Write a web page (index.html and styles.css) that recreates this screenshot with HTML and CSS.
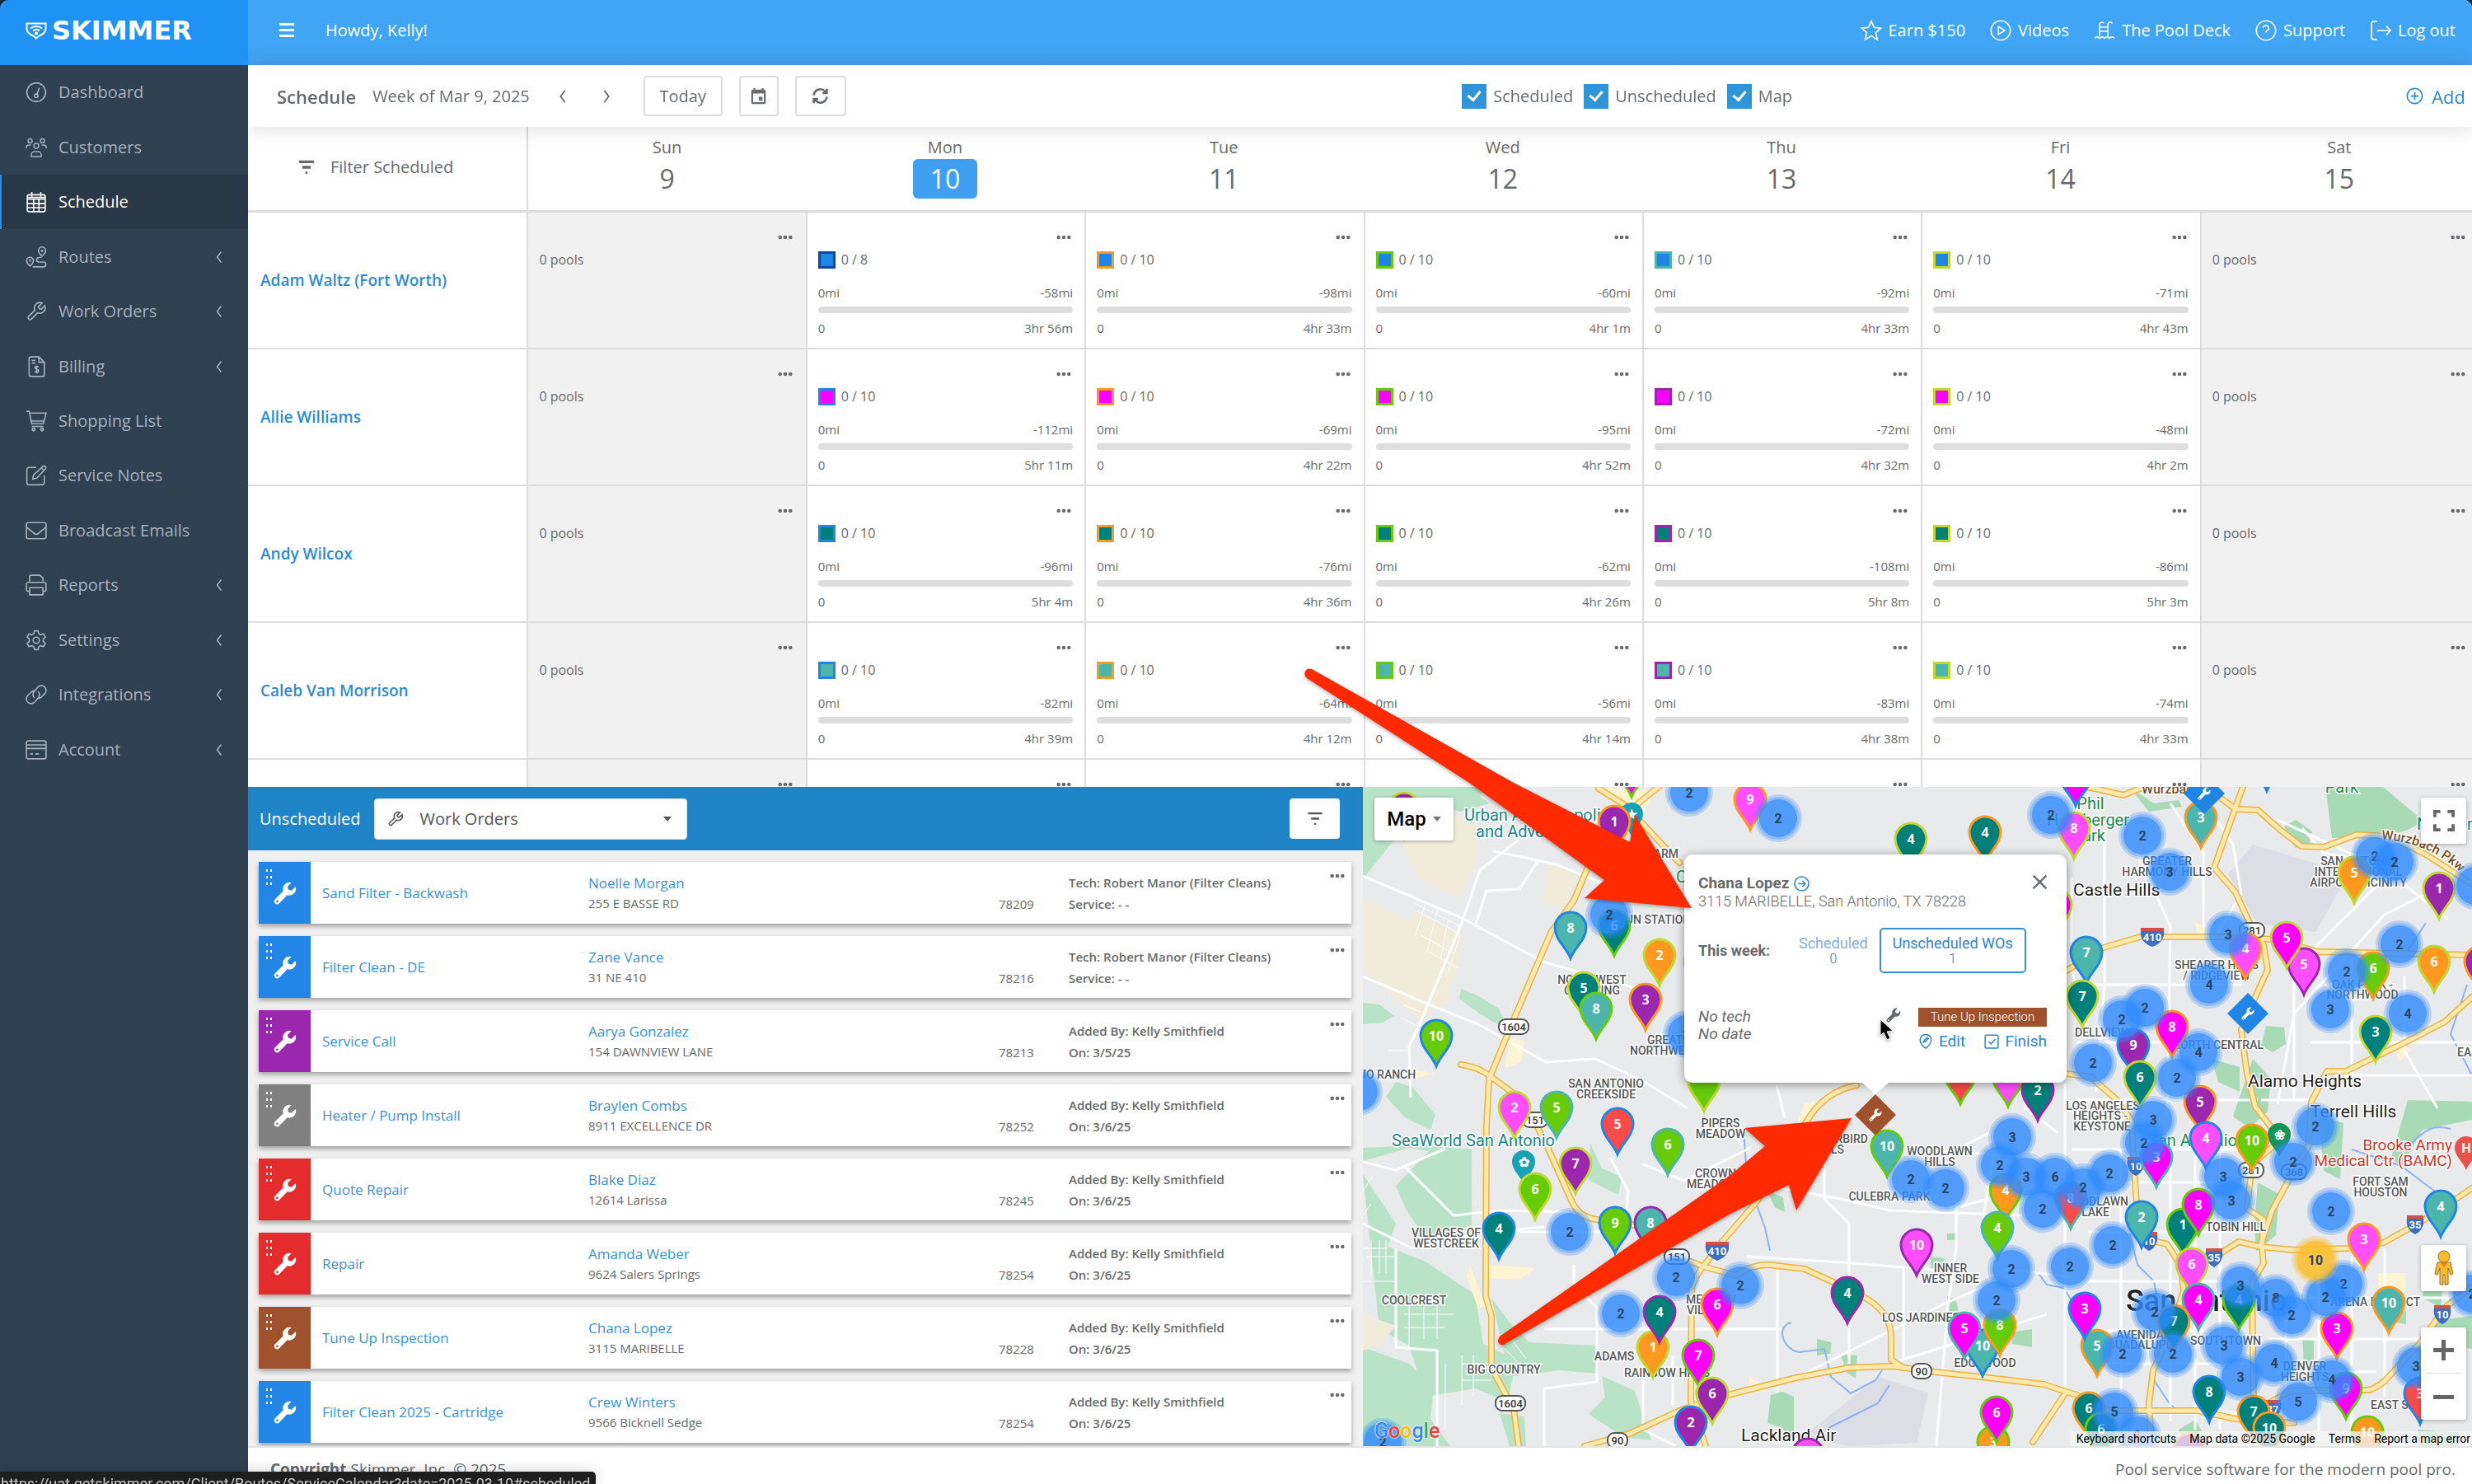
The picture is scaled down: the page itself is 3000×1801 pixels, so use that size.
FILE: index.html
```html
<!DOCTYPE html>
<html lang="en">
<head>
<meta charset="utf-8">
<title>Skimmer – Schedule</title>
<link rel="stylesheet" href="styles.css">
<script src="app.js" defer></script>
</head>
<body>
<svg class="sprite" aria-hidden="true">
  <symbol id="i-gauge" viewBox="0 0 24 24"><circle cx="12" cy="12" r="10.5"/><circle cx="12" cy="16" r="2"/><path d="M12.8 14l2.7-7M6 12h.1M7.8 7.8h.1M12 5.8h.1M18 12h.1"/></symbol>
  <symbol id="i-users" viewBox="0 0 26 24"><circle cx="13" cy="10" r="3"/><circle cx="5.500" cy="4" r="2.500"/><circle cx="20.500" cy="4" r="2.500"/><path d="M7 23v-2a4 4 0 0 1 4-4h4a4 4 0 0 1 4 4v2zM1 13v-1a3 3 0 0 1 3-3h2.500M25 13v-1a3 3 0 0 0-3-3h-2.500"/></symbol>
  <symbol id="i-calendar" viewBox="0 0 24 24"><rect x="2" y="4" width="20" height="19" rx="2"/><path d="M2 9h20M2 14h20M2 18.500h20M9 9v14M15 9v14M7 1v5M17 1v5M2 7h20"/></symbol>
  <symbol id="i-route" viewBox="0 0 24 24"><path d="M18.500 11s-4-3.500-4-6.300a4 4 0 0 1 8 0c0 2.800-4 6.300-4 6.300zM5 22s-3.800-3.300-3.800-6a3.800 3.800 0 0 1 7.600 0c0 2.700-3.800 6-3.800 6zM18 12.500h-3a2.500 2.500 0 0 0 0 5h5a2.700 2.700 0 0 1 0 5.500H8"/><circle cx="18.500" cy="5" r=".6"/><circle cx="5" cy="16" r=".6"/></symbol>
  <symbol id="i-wrench" viewBox="0 0 24 24"><path d="M14.700 6.300a1 1 0 0 0 0 1.400l1.600 1.600a1 1 0 0 0 1.400 0l3.770-3.770a6 6 0 0 1-7.940 7.940l-6.910 6.910a2.120 2.120 0 0 1-3-3l6.910-6.910a6 6 0 0 1 7.940-7.940l-3.760 3.760z"/></symbol>
  <symbol id="i-wrench-solid" viewBox="0 0 24 24"><path fill="currentColor" stroke="none" fill-rule="evenodd" d="M22.800 5.200l-4 4-3.400-.8-.8-3.400 4-4a6.800 6.800 0 0 0-8.500 8.700L1.600 18.200a3 3 0 0 0 4.300 4.300l8.400-8.500a6.800 6.800 0 0 0 8.500-8.800zM3.800 21.600a1.200 1.200 0 1 1 0-2.400 1.200 1.200 0 0 1 0 2.400z"/></symbol>
  <symbol id="i-bill" viewBox="0 0 24 24"><path d="M4 3a2 2 0 0 1 2-2h9l6 6v14a2 2 0 0 1-2 2H6a2 2 0 0 1-2-2zM15 1v6h6M7 5h4M7 8h4M14.500 12.500c-.5-.7-1.200-1-2-1-1.200 0-2 .7-2 1.600 0 2.400 4.200 1.100 4.200 3.500 0 1-.9 1.700-2.200 1.700-1 0-1.800-.4-2.200-1.100M12.500 10.500v9"/></symbol>
  <symbol id="i-cart" viewBox="0 0 24 24"><path d="M1 1h3l3 14h13l3-12H4.500M6 12h15M7 18h13"/><circle cx="9" cy="21.500" r="1.500"/><circle cx="18.500" cy="21.500" r="1.500"/></symbol>
  <symbol id="i-note" viewBox="0 0 24 24"><path d="M12 3H4a2.500 2.500 0 0 0-2.500 2.500v14.500A2.500 2.500 0 0 0 4 22.500h14.500A2.500 2.500 0 0 0 21 20v-8M8 16l1-4.500L19.500 1.800a2 2 0 0 1 2.800 2.800L12.500 15zM17.500 3.500l3 3"/></symbol>
  <symbol id="i-mail" viewBox="0 0 24 24"><rect x="1" y="3" width="22" height="18" rx="2"/><path d="M1 8l8.500 7a4 4 0 0 0 5 0L23 8"/></symbol>
  <symbol id="i-print" viewBox="0 0 24 24"><path d="M4.500 8V3a2 2 0 0 1 2-2h9.500l3.500 3v4M4 19H3a2 2 0 0 1-2-2v-6a2 2 0 0 1 2-2h18a2 2 0 0 1 2 2v6a2 2 0 0 1-2 2h-1M4.500 15h15v8h-15zM19 12h.1"/></symbol>
  <symbol id="i-gear" viewBox="0 0 24 24"><circle cx="12" cy="12" r="3.500"/><path d="M10 1.500h4l.8 3.200 2.200 1.200 3.200-1 2 3.500-2.400 2.400v2.400l2.400 2.400-2 3.500-3.200-1-2.200 1.200-.8 3.200h-4l-.8-3.200L7 18.100l-3.200 1-2-3.500 2.400-2.400v-2.400L1.800 8.400l2-3.500 3.200 1 2.200-1.200z"/></symbol>
  <symbol id="i-link" viewBox="0 0 24 24"><path d="M10 15.500c-2.500-2-2-5.500 0-7.500l4-4.500c2-2 5.500-2 7.500 0s2 5.500 0 7.500l-4 4c-1.500 1.300-3 1.500-4.500 1M14 8.500c2.500 2 2 5.500 0 7.500l-4 4.500c-2 2-5.500 2-7.500 0s-2-5.500 0-7.500l4-4c1.500-1.300 3-1.500 4.500-1"/></symbol>
  <symbol id="i-card" viewBox="0 0 24 24"><rect x="1" y="2" width="22" height="20" rx="2"/><path d="M1 6.500h22M1 10.500h22M5 16.500h3.500M11 16.500h4"/></symbol>
  <symbol id="i-left" viewBox="0 0 12 20"><path d="M9 2L3 10l6 8"/></symbol>
  <symbol id="i-right" viewBox="0 0 12 20"><path d="M3 2l6 8-6 8"/></symbol>
  <symbol id="i-star" viewBox="0 0 24 24"><path d="M12 1.500l3.200 7 7.500.8-5.600 5.100 1.600 7.600L12 18.100 5.300 22l1.600-7.600L1.300 9.300l7.500-.8z"/></symbol>
  <symbol id="i-play" viewBox="0 0 24 24"><circle cx="12" cy="12" r="10.800"/><path d="M9.500 7.500l7 4.500-7 4.500z"/></symbol>
  <symbol id="i-pool" viewBox="0 0 26 24"><path d="M7 19V4.500a3 3 0 0 1 5.500-1.200M17 19V4.500a3 3 0 0 1 5.500-1.200M7 8h10M7 13h10M1 21.500c2-2.500 4-2.500 6 0 2-2.500 4-2.500 6 0 2-2.500 4-2.500 6 0 2-2.500 4-2.500 6 0"/></symbol>
  <symbol id="i-help" viewBox="0 0 24 24"><circle cx="12" cy="12" r="10.800"/><path d="M9 9.300a3 3 0 1 1 4.300 2.700c-.9.500-1.300 1-1.300 2.200M12 17.500h.1"/></symbol>
  <symbol id="i-exit" viewBox="0 0 24 24"><path d="M8 2H4a2 2 0 0 0-2 2v16a2 2 0 0 0 2 2h4M8 12h15M18.500 7l4.500 5-4.500 5"/></symbol>
  <symbol id="i-plus" viewBox="0 0 24 24"><circle cx="12" cy="12" r="10.500"/><path d="M12 6.500v11M6.500 12h11"/></symbol>
  <symbol id="i-filter" viewBox="0 0 24 24"><path d="M1 4h22M6 12h12M10.500 20h3"/></symbol>
  <symbol id="i-event" viewBox="0 0 24 24"><path fill="currentColor" stroke="none" fill-rule="evenodd" d="M5 1h2.500v2h9V1H19v2h1a2 2 0 0 1 2 2v16a2 2 0 0 1-2 2H4a2 2 0 0 1-2-2V5a2 2 0 0 1 2-2h1zM4.500 8.500v12h15v-12zM12.500 13h5v5.500h-5z"/></symbol>
  <symbol id="i-sync" viewBox="0 0 24 24"><path d="M3 11a9 9 0 0 1 15.500-5.500L21 8M21 2v6h-6M21 13a9 9 0 0 1-15.500 5.500L3 16M3 22v-6h6"/></symbol>
  <symbol id="i-dots" viewBox="0 0 20 6"><g fill="currentColor" stroke="none"><circle cx="3" cy="3" r="2.500"/><circle cx="10" cy="3" r="2.500"/><circle cx="17" cy="3" r="2.500"/></g></symbol>
  <symbol id="i-grip" viewBox="0 0 8 20"><path fill="currentColor" stroke="none" d="M0 0h2v3H0zM5 0h2v3H5zM0 8h2v3H0zM5 8h2v3H5zM0 16h2v3H0zM5 16h2v3H5z"/></symbol>
  <symbol id="i-caret" viewBox="0 0 10 6"><path fill="currentColor" stroke="none" d="M0 0h10L5 6z"/></symbol>
  <symbol id="i-go" viewBox="0 0 24 24"><circle cx="12" cy="12" r="10.800"/><path d="M6.500 12h11M13 7.500l4.500 4.500-4.500 4.500"/></symbol>
  <symbol id="i-close" viewBox="0 0 24 24"><path d="M2 2l20 20M22 2L2 22"/></symbol>
  <symbol id="i-pinedit" viewBox="0 0 24 24"><path d="M12 23s-9-7-9-13.500a9 9 0 0 1 18 0C21 16 12 23 12 23zM8.500 13l1-3 5-4.500 1.800 1.800-5 4.700z"/></symbol>
  <symbol id="i-check" viewBox="0 0 24 24"><rect x="1.500" y="1.500" width="21" height="21" rx="2"/><path d="M7 12l4 4 7-8"/></symbol>
  <symbol id="i-full" viewBox="0 0 24 24"><path d="M1.500 8V1.500H8M16 1.500h6.500V8M22.500 16v6.500H16M8 22.500H1.500V16"/></symbol>
  <symbol id="i-man" viewBox="0 0 24 44"><g fill="#f9bb2d" stroke="#8a6a2a" stroke-width="1"><path d="M4 15h16l3 14-3 1-3-8v20h-4V30h-2v12H7V22l-3 8-3-1z"/><circle cx="12" cy="8" r="7"/></g><path fill="#e07b1f" stroke="none" d="M8 15h8l-4 6z"/></symbol>
</svg>

<div class="app">
  <aside class="side">
    <a class="brand" href="#"><svg class="shield" viewBox="0 0 26 20" aria-hidden="true"><path d="M1.500 1.500h23v6c0 5-4 7.500-8 9L13 19.500 9.500 16.500c-4-1.500-8-4-8-9z"/><path d="M6 7.500c4-3.500 10-3.500 14 0M9 10.500c2.500-2 5.500-2 8 0"/><circle cx="13" cy="13.500" r="1"/></svg><span>SKIMMER</span></a>
    <nav class="nav" aria-label="Main">
      <a href="#"><svg class="ic"><use href="#i-gauge"/></svg><span>Dashboard</span></a>
      <a href="#"><svg class="ic"><use href="#i-users"/></svg><span>Customers</span></a>
      <a href="#" class="on" aria-current="page"><svg class="ic"><use href="#i-calendar"/></svg><span>Schedule</span></a>
      <a href="#"><svg class="ic"><use href="#i-route"/></svg><span>Routes</span><svg class="chev"><use href="#i-left"/></svg></a>
      <a href="#"><svg class="ic"><use href="#i-wrench"/></svg><span>Work Orders</span><svg class="chev"><use href="#i-left"/></svg></a>
      <a href="#"><svg class="ic"><use href="#i-bill"/></svg><span>Billing</span><svg class="chev"><use href="#i-left"/></svg></a>
      <a href="#"><svg class="ic"><use href="#i-cart"/></svg><span>Shopping List</span></a>
      <a href="#"><svg class="ic"><use href="#i-note"/></svg><span>Service Notes</span></a>
      <a href="#"><svg class="ic"><use href="#i-mail"/></svg><span>Broadcast Emails</span></a>
      <a href="#"><svg class="ic"><use href="#i-print"/></svg><span>Reports</span><svg class="chev"><use href="#i-left"/></svg></a>
      <a href="#"><svg class="ic"><use href="#i-gear"/></svg><span>Settings</span><svg class="chev"><use href="#i-left"/></svg></a>
      <a href="#"><svg class="ic"><use href="#i-link"/></svg><span>Integrations</span><svg class="chev"><use href="#i-left"/></svg></a>
      <a href="#"><svg class="ic"><use href="#i-card"/></svg><span>Account</span><svg class="chev"><use href="#i-left"/></svg></a>
    </nav>
  </aside>

  <main class="main">
    <header class="top">
      <button class="burger" type="button" aria-label="Toggle menu"><i></i><i></i><i></i></button>
      <span class="howdy">Howdy, Kelly!</span>
      <nav class="links" aria-label="Account">
        <a href="#"><svg class="ic"><use href="#i-star"/></svg>Earn $150</a>
        <a href="#"><svg class="ic"><use href="#i-play"/></svg>Videos</a>
        <a href="#"><svg class="ic"><use href="#i-pool"/></svg>The Pool Deck</a>
        <a href="#"><svg class="ic"><use href="#i-help"/></svg>Support</a>
        <a href="#"><svg class="ic"><use href="#i-exit"/></svg>Log out</a>
      </nav>
    </header>

    <div class="bar">
      <div class="bar-left">
        <h1>Schedule</h1>
        <span class="week">Week of Mar 9, 2025</span>
        <button class="step" type="button" aria-label="Previous week"><svg><use href="#i-left"/></svg></button>
        <button class="step" type="button" aria-label="Next week"><svg><use href="#i-right"/></svg></button>
        <button class="btn today" type="button">Today</button>
        <button class="btn pick" type="button" aria-label="Pick date"><svg><use href="#i-event"/></svg></button>
        <button class="btn sync" type="button" aria-label="Refresh"><svg><use href="#i-sync"/></svg></button>
      </div>
      <div class="checks">
        <label><input type="checkbox" checked>Scheduled</label>
        <label><input type="checkbox" checked>Unscheduled</label>
        <label><input type="checkbox" checked>Map</label>
      </div>
      <a class="add" href="#"><svg><use href="#i-plus"/></svg>Add</a>
    </div>

    <section class="cal">
      <table>
        <thead>
          <tr>
            <th scope="col"><button class="filter" type="button"><svg><use href="#i-filter"/></svg>Filter Scheduled</button></th>
            <th scope="col">Sun<b>9</b></th>
            <th scope="col">Mon<b class="now">10</b></th>
            <th scope="col">Tue<b>11</b></th>
            <th scope="col">Wed<b>12</b></th>
            <th scope="col">Thu<b>13</b></th>
            <th scope="col">Fri<b>14</b></th>
            <th scope="col">Sat<b>15</b></th>
          </tr>
        </thead>
        <tbody id="techs"></tbody>
      </table>
    </section>

    <div class="lower">
      <section class="orders">
        <div class="orders-head">
          <label for="kind">Unscheduled</label>
          <div class="pickbox">
            <svg class="lead"><use href="#i-wrench"/></svg>
            <select id="kind"><option>Work Orders</option></select>
            <svg class="caret"><use href="#i-caret"/></svg>
          </div>
          <button class="sift" type="button" aria-label="Filter"><svg><use href="#i-filter"/></svg></button>
        </div>
        <ul class="list" id="orders"></ul>
      </section>

      <section class="map" aria-label="Map">
        <svg class="ground" width="100%" height="100%">
          <g fill="#b8e3c6">
            <path d="M0 0h150l-8 12 12 8-36 10-20-6-60 40L0 112z"/>
            <path d="M119 245l20 8 26 16 10 22-18-6-24-16-16-12zM0 262l20 2 18 14-14 8-24 2z"/>
            <path d="M40 358l20 6 28 34-6 18-30-14-24-26z"/>
            <path d="M0 438l70-3 62 5v92l-56 16-24-36-12-28 40-42-24-4-56 16z"/>
            <path d="M0 470l40 60-10 28 46 18 60 40 10 60 40 20-10 50-40-16-60 10-20-62-36-20z"/>
            <path d="M0 680l56 20 30 28-4 40 24 32H0zM156 620l22 30 24 24 82 4 2 34-48-4-60 8zM290 715l40 18 20 60-34-4-42-28 20-20z"/>
            <path d="M276 433l14 30 24 10-4 22-36-18zM166 760l30 4 2 36h-20z"/>
          </g>
          <g fill="#a8dab5">
            <path d="M1168 0h70l50 42-20 10-20 6-72 4zM1118 48l14-8 20 14-4 18-16 2-10-14zM930 0l30 20 30-4 4 8-40 6zM1096 290l22 2 2 20-16 10-14-8zM1080 330l22 24-4 40-22 20-20-14zM1268 380l78 2v22l-60 12-26 46-12-12zM1030 330l34 10v30l-26-12zM495 738l14-4 14 6v56l-14-18-18-6zM551 670l18 4-2 14-16 2zM580 688l20 2-2 28-12-8zM490 490l20 8 2 18-12-6zM709 618l10 4 4 14-14 2zM688 570l18 2-2 18-14-4zM786 662l26-4v22l-24-4zM1086 480l26 14-4 50-24 20-2-34zM1160 400l30 8-4 68-20-10zM1240 632l26 4v16l-26-4zM1300 648l46-6v40l-40-8zM1140 670l14 2v30l-12-4zM1288 590l24 2-4 40-22-12zM990 780l20-12 8 14-24 8zM1280 780l50 4v16h-50zM709 542h10v8h-10z"/>
          </g>
          <g fill="#f1ecd9">
            <path d="M30 30l110 6-4 60-20 40-50-26zM226 95l32 8-10 44-30-8zM0 135l100 46 6 80-40 20-66-60zM60 150l60 30-10 60-50-20zM0 640l40 14-20 24-20 6z"/>
            <path fill="#fcf4d3" d="M280 0l74 4-24 50-16-30zM178 304l18 4-4 26-20 8zM150 580l60 4-20 14-36-2zM130 580l18 50-8 4-14-40zM60 342l26 6-24 6zM1232 590h34v22h-34zM1250 310l22 8-14 16zM536 384l20-4-18 34-12-2zM470 715l20 18-24 4zM1010 165l16 6-12 18z"/>
          </g>
          <path fill="#dcdde5" d="M1080 70l66 20 50 16-40 70-70-10-36-60zM626 716l60 20-14 60-80 4-60-10z"/>
          <g fill="none" stroke="#8ab4f8">
            <path d="M520 650c-20 4-10 34 10 36l30-4 8 34 24 20 30-16 8-12M462 415l4 60 22 60 6 28M818 588l12 16 20 4 12 18M930 540l10 40 20 20 6 30M960 720l20 30 14 10M1290 165l-26 40M1340 240l-20 60 26 50M1270 435c20-20 30-26 50-20M1200 440l60 20 40 30M565 778l60-30 14-22"/>
          </g>
          <g class="street">
            <path d="M0 108l122 52 96 52 126 36M0 230l80 34 60 24 82 46 60-4 56 26 56 34M188 65l-46 36-22 64-50 120-14 30 2 62M158 78l40 8 36 8 60 24M212 90l-22 34-40 2-14 44M0 455l40 10 60-26M0 530l60 30 90-20 70-6M40 560l0 120 50 4v120M50 460l60 60 60-6 80 2M150 540l150 0M256 580v24l28 28v90l-64 8v70M220 658h210M300 450l22 40-2 30M345 530v20M340 458l50 20 80-40M430 400l30 34M340 720v60l40 20M376 690v60M502 362l10 40M560 420v80l30 30v170M470 480l110 20 60 14 160 6M466 570l130 8 120 10M656 584v110M503 580v155M430 658h78M770 420l-20 120M680 440l140 10M760 500l-40 10v50l-10 70-14 170M640 700l190-60M520 720l180-90 90-40M804 330v60l40 30M852 360v380M700 450l60-30M780 585l80 10"/>
            <path d="M860 110v110l20 80M900 60v180l-10 130M940 80l40 90-4 230M980 20l40 60v90M1010 0l46 70 10 60-30 50M1140 50l26 30 50 10 50 30 50 40M1110 40l130 60M1250 100l-90 90-30 40v150M1290 130l-50 25-110 120-20 110M1200 200v150M1264 230v90l40 70M1150 310h196M1180 350h166M866 240h200M866 310h190M866 380h220M860 440h240M860 480h210M880 540h210M880 600h210M870 660h150M890 700h180M880 760h200M1010 440v340M1040 420v360M980 440v330M920 440v340M1120 600v200M1160 590v210M1200 570v230M1240 560v180M1110 620h240M1100 670h230M1110 710h120M1150 380h-60"/>
          </g>
          <g class="street thin">
            <path d="M60 140l60 30M64 150l54 28M76 140l-12 40M90 150l-12 50M104 160l-10 50M118 180l-14 44M70 180l40 22M80 200l36 20M0 490l12-18M0 520l10-14M0 560h30M10 550v40M20 550v40M28 550v40M4 570h34M0 600h40M50 640h60M50 656h50M56 630v50M74 630v40M90 630v40M100 700v80M120 690v60M134 690v50M120 700h36M120 720h36M50 265l20 8M46 280l20 10M30 320h24M170 680l20 20M180 670l18 24"/>
          </g>
          <g id="highways"></g>
          <g id="labels"></g>
          <g id="markers"></g>
        </svg>
        <button class="ctl maptype" type="button">Map<svg><use href="#i-caret"/></svg></button>
        <button class="ctl full" type="button" aria-label="Fullscreen"><svg><use href="#i-full"/></svg></button>
        <button class="ctl pegman" type="button" aria-label="Street View"><svg><use href="#i-man"/></svg></button>
        <div class="ctl zoom">
          <button type="button" aria-label="Zoom in"><i></i><i class="v"></i></button>
          <button type="button" aria-label="Zoom out"><i></i></button>
        </div>
        <div class="google" aria-label="Google"><span>G</span><span>o</span><span>o</span><span>g</span><span>l</span><span>e</span></div>
        <div class="credit"><a href="#">Keyboard shortcuts</a><span>Map data ©2025 Google</span><a href="#">Terms</a><a href="#">Report a map error</a></div>

        <article class="info">
          <button class="close" type="button" aria-label="Close"><svg><use href="#i-close"/></svg></button>
          <h2>Chana Lopez <a href="#" aria-label="Open customer"><svg><use href="#i-go"/></svg></a></h2>
          <p class="addr">3115 MARIBELLE, San Antonio, TX 78228</p>
          <div class="tabs">
            <strong>This week:</strong>
            <button type="button" class="tab dim">Scheduled<span>0</span></button>
            <button type="button" class="tab sel">Unscheduled WOs<span>1</span></button>
          </div>
          <div class="job">
            <p class="none">No tech<br>No date</p>
            <svg class="tool"><use href="#i-wrench-solid"/></svg>
            <div class="act">
              <span class="tag">Tune Up Inspection</span>
              <div class="acts"><a href="#"><svg><use href="#i-pinedit"/></svg>Edit</a><a href="#"><svg><use href="#i-check"/></svg>Finish</a></div>
            </div>
          </div>
        </article>
      </section>
    </div>

    <footer class="foot">
      <span><b>Copyright</b> Skimmer, Inc. © 2025</span>
      <span>Pool service software for the modern pool pro.</span>
    </footer>
  </main>
</div>

<div class="status">https://uat.getskimmer.com/Client/Routes/ServiceCalendar?date=2025-03-10#scheduled</div>

<svg class="notes" aria-hidden="true">
  <g fill="#ff2a00">
    <path d="M1592 812Q1586 810 1584 815T1586 823L1783 950 1947 1068 1923 1090 2053 1102 1984 989 1978 1022 1837 950z"/>
    <path d="M1820 1622Q1816 1628 1820 1631T1828 1630L2100 1473 2171 1438 2180 1469 2247 1357 2117 1369 2142 1391 2100 1426z"/>
  </g>
  <path fill="#000" stroke="#fff" stroke-width="1" d="M2282 1237v20l4-4 4 9 4-2-4-8 7-1z"/>
</svg>
</body>
</html>
```
FILE: styles.css
```css
* { box-sizing: border-box; }
html { background: #16293a; }
body { margin: 0; font: 20px/28px "Open Sans", "Noto Sans", sans-serif; color: #676a6c; overflow: hidden; }
a { color: inherit; text-decoration: none; }
button { font: inherit; color: inherit; background: none; border: 0; padding: 0; margin: 0; }
h1, h2, p, ul { margin: 0; padding: 0; }
svg { fill: none; stroke: currentColor; stroke-width: 2; flex: none; overflow: visible; }
.sprite { position: absolute; width: 0; height: 0; }

.app { display: flex; height: 100vh; border-radius: 10px 10px 0 0; overflow: hidden; }
.side { width: 301px; flex: none; background: #2f4050; color: #a7b1bd; }
.brand { display: flex; align-items: center; gap: 6px; height: 79px; padding: 0 0 6px 31px; background: #1f93f5; color: #fff; font: bold 32px/32px "DejaVu Sans", sans-serif; }
.shield { width: 26px; height: 20px; }
.nav { display: grid; grid-template-rows: repeat(13, 1fr); height: 864px; }
.nav a { display: flex; align-items: center; gap: 14px; padding: 0 30px 0 29px; border-left: 2px solid transparent; }
.nav a.on { background: #293846; color: #fff; border-color: #1e90f0; }
.ic { width: 26px; height: 26px; stroke-width: 1.5; }
.chev { width: 10px; height: 16px; margin-left: auto; }

.main { flex: 1; min-width: 0; display: flex; flex-direction: column; background: #fff; overflow: hidden; }
.top { display: flex; align-items: center; height: 79px; flex: none; padding: 0 20px 6px 38px; background: linear-gradient(#40a5f5 70%, #46a0ee); color: #fff; }
.burger { display: grid; gap: 4px; width: 18px; margin-right: 38px; }
.burger i { height: 3px; background: #fff; }
.links { display: flex; gap: 30px; margin-left: auto; }
.links a { display: flex; align-items: center; gap: 8px; }

.bar { position: relative; z-index: 1; display: flex; align-items: center; height: 75px; flex: none; padding: 0 8px 0 35px; background: #fff; box-shadow: 0 2px 24px rgba(0, 0, 0, .14); }
.bar-left { display: flex; align-items: center; flex: 1437; }
h1 { font-size: 22px; font-weight: 600; margin-right: 20px; }
.week { margin-right: 32px; }
.step { width: 16px; height: 24px; margin-right: 37px; }
.step svg { width: 12px; height: 18px; }
.btn { display: flex; align-items: center; justify-content: center; height: 49px; border: 2px solid #dcdcdc; border-radius: 4px; margin-right: 20px; }
.today { width: 96px; }
.pick { width: 48px; }
.sync { width: 62px; }
.btn svg { width: 21px; height: 21px; stroke-width: 3; }
.checks { display: flex; gap: 13px; flex: 1145; }
.checks label { display: flex; align-items: center; gap: 8px; }
.checks input { appearance: none; display: grid; place-items: center; width: 30px; height: 30px; margin: 0; background: #3095d8; }
.checks input:checked::before { content: ""; width: 7px; height: 12px; margin-top: -4px; border: solid #fff; border-width: 0 3px 3px 0; transform: rotate(40deg); }
.add { display: flex; align-items: center; gap: 10px; font-size: 22px; color: #2b8bd2; }
.add svg { width: 21px; height: 21px; }

.cal { flex: 801 1 0; min-height: 0; overflow: hidden; }
.cal table { width: calc(100% + 8px); table-layout: fixed; border-collapse: separate; border-spacing: 0; }
thead th { font-weight: 400; padding: 0 0 3px; height: 104px; border-bottom: 3px solid #dcdcdc; vertical-align: middle; line-height: 28px; }
thead th:nth-child(2) { border-left: 2px solid #dcdcdc; }
thead b { display: block; width: 78px; height: 48px; margin: 0 auto; font-size: 32px; line-height: 48px; font-weight: 400; }
thead .now { background: #3f9ff0; color: #fff; border-radius: 6px; }
.filter { display: flex; align-items: center; gap: 19px; padding-left: 61px; }
.filter svg { width: 20px; height: 20px; stroke-width: 4; }
tbody td, tbody th { height: 166px; padding: 0; border-bottom: 2px solid #dcdcdc; vertical-align: top; }
tbody td { border-left: 2px solid #dcdcdc; }
tbody th { vertical-align: middle; text-align: left; padding-left: 15px; font-size: 19px; font-weight: 600; color: #2b8bd2; }
td.off { background: #f1f1f1; }
.cell { display: flex; flex-direction: column; padding: 25px 14px 0 13px; font-size: 15px; line-height: 20px; }
.more { align-self: flex-end; width: 18px; height: 10px; margin-right: 2px; line-height: 0; }
.more svg { width: 18px; height: 6px; }
.count { display: flex; align-items: center; gap: 7px; margin: 10px 0 18px; font-size: 16px; line-height: 24px; font-weight: 500; }
.sw { width: 21px; height: 21px; border: 3px solid; }
.pair { display: flex; justify-content: space-between; }
.track { height: 8px; margin: 7px 0 8px; border-radius: 4px; background: #dedede; }

.lower { flex: 800 1 0; min-height: 0; display: flex; }
.orders { flex: 1353 1 0; min-width: 0; display: flex; flex-direction: column; background: #f0f0f0; }
.orders-head { display: flex; align-items: center; height: 77px; flex: none; padding: 0 28px 0 14px; background: #1f84c8; color: #fff; }
.pickbox { display: grid; align-items: center; width: 380px; height: 50px; margin: 0 auto 0 17px; color: #555; }
.pickbox > * { grid-area: 1 / 1; }
.pickbox select { appearance: none; width: 100%; height: 100%; padding: 0 50px 0 54px; border: 1px solid #ddd; border-radius: 4px; background: #fff; font: inherit; color: inherit; }
.lead { width: 20px; height: 20px; margin-left: 16px; z-index: 1; }
.caret { width: 10px; height: 6px; justify-self: end; margin-right: 19px; z-index: 1; }
.sift { display: grid; place-items: center; width: 61px; height: 49px; border-radius: 4px; background: #fff; color: #555; }
.sift svg { width: 20px; height: 19px; stroke-width: 3; }
.list { list-style: none; flex: 1; min-height: 0; overflow: hidden; padding: 14px 14px 0 13px; }
.list li { display: grid; grid-template-columns: 63px minmax(0, 337fr) minmax(0, 498fr) 85px minmax(0, 343fr); align-items: center; height: 75px; margin-bottom: 15px; background: #fff; box-shadow: 0 3px 6px rgba(0, 0, 0, .35); font-size: 15px; line-height: 24px; }
.kind { display: flex; align-self: stretch; padding: 9px 0 0 9px; color: #fff; }
.kind svg:first-child { width: 8px; height: 20px; }
.kind svg:last-child { width: 28px; height: 28px; margin: 15px 0 0 1px; }
.list a { font-size: 17px; color: #3a92d6; }
.title { padding-left: 14px; }
.zip { padding-top: 26px; }
.meta { display: flex; justify-content: space-between; font-weight: 600; line-height: 26px; }
.meta .more { align-self: flex-start; margin: 0 8px 0 0; }

.map { position: relative; flex: 1346 1 0; min-width: 0; background: #e8eaeb; overflow: hidden; font-family: Roboto, sans-serif; }
.ground { display: block; stroke: none; }
.street { stroke: #fff; stroke-width: 3; fill: none; stroke-linejoin: round; }
.thin { stroke-width: 1; }
.hw-edge { fill: none; stroke: #ecb23f; stroke-width: 8; stroke-linejoin: round; stroke-linecap: round; }
.hw-fill { fill: none; stroke: #fde9ad; stroke-width: 5; stroke-linejoin: round; stroke-linecap: round; }
#labels text { paint-order: stroke; stroke: #fff; stroke-width: 3; font-size: 14px; font-weight: 500; fill: #54585c; }
#labels .town { font-size: 21px; font-weight: 400; fill: #1f1f1f; }
#labels .city { font-size: 36px; fill: #1f1f1f; }
#labels .poi { font-size: 20px; font-weight: 400; fill: #15868c; }
#labels .park { font-size: 20px; font-weight: 400; fill: #1d8a4c; }
#labels .med { font-size: 19px; font-weight: 400; fill: #c5382f; }
#labels .road { fill: #7a4e1c; font-size: 16px; }
#labels .sh { font-size: 13px; stroke: none; fill: #333; }
#labels .shi { font-size: 13px; font-weight: 700; stroke: none; fill: #fff; }
#markers text { font: bold 16px "Open Sans", sans-serif; text-anchor: middle; fill: #fff; }
#markers .cl text { fill: #2c4463; font-family: Roboto, sans-serif; }
.ctl { position: absolute; background: #fff; border-radius: 3px; box-shadow: 0 1px 5px rgba(0, 0, 0, .3); color: #666; }
.maptype { left: 14px; top: 13px; display: flex; align-items: center; justify-content: center; gap: 8px; width: 96px; height: 52px; font-size: 24px; font-weight: 500; color: #000; }
.maptype svg { width: 10px; height: 6px; color: #777; }
.full, .pegman { display: grid; place-items: center; right: 7px; width: 55px; height: 56px; }
.full { top: 13px; }
.full svg { width: 26px; height: 26px; stroke-width: 4; }
.pegman { bottom: 188px; }
.pegman svg { width: 24px; height: 44px; }
.zoom { right: 7px; bottom: 32px; width: 55px; height: 112px; display: grid; grid-template-rows: 1fr 1fr; padding: 0 7px; }
.zoom button { display: grid; place-items: center; }
.zoom button:first-child { border-bottom: 1px solid #ddd; }
.zoom i { grid-area: 1 / 1; width: 25px; height: 5px; background: #666; }
.zoom i.v { width: 5px; height: 25px; }
.google { position: absolute; left: 14px; bottom: 2px; font: 500 25px/32px Roboto, sans-serif; text-shadow: 0 0 2px #fff, 0 0 2px #fff; color: #4285f4; }
.google span:nth-child(2), .google span:nth-child(6) { color: #ea4335; }
.google span:nth-child(3) { color: #fbbc04; }
.google span:nth-child(5) { color: #34a853; }
.credit { position: absolute; right: 0; bottom: 0; display: flex; gap: 16px; padding: 0 2px 0 8px; background: rgba(245, 245, 245, .75); color: #000; font-size: 14px; line-height: 18px; }

.info { position: absolute; left: 390px; top: 82px; width: 464px; height: 277px; padding: 24px 24px 0 17px; border-radius: 10px; background: #fff; box-shadow: 0 2px 12px rgba(0, 0, 0, .4); font-size: 19px; line-height: 22px; font-weight: 300; }
.info::after { content: ""; position: absolute; left: 216px; bottom: -14px; border: solid transparent; border-width: 14px 16px 0; border-top-color: #fff; }
.info a { color: #2b86d0; }
.info h2 { display: flex; align-items: center; gap: 6px; font-size: 19px; line-height: 22px; font-weight: 700; }
.info h2 svg { display: block; width: 19px; height: 19px; }
.addr { font-size: 18px; }
.close { position: absolute; right: 23px; top: 24px; width: 19px; height: 19px; line-height: 0; }
.close svg { width: 19px; height: 19px; stroke-width: 3; }
.tabs { display: flex; align-items: center; margin-top: 21px; }
.tabs strong { width: 108px; font-size: 18px; font-weight: 700; }
.tab { display: grid; align-content: center; height: 55px; padding: 0 14px; font-size: 18px; line-height: 19px; font-weight: 400; color: #2b86d0; }
.tab span { font-size: 16px; font-weight: 300; color: #676a6c; }
.dim { color: #7cb0e0; }
.sel { border: 2px solid #3a8fd4; border-radius: 5px; }
.job { display: flex; margin-top: 42px; }
.none { font-style: oblique 12deg; font-weight: 400; line-height: 21px; }
.tool { width: 18px; height: 18px; margin: 0 21px 0 auto; }
.tag { display: block; width: 156px; height: 23px; background: #a0522d; color: #fff; font-size: 15px; line-height: 23px; text-align: center; }
.acts { display: flex; justify-content: space-between; margin-top: 7px; font-weight: 400; }
.acts a { display: flex; align-items: center; gap: 7px; }
.acts svg { width: 18px; height: 18px; }

.foot { display: flex; justify-content: space-between; align-items: center; height: 46px; flex: none; padding: 8px 20px 0 27px; border-top: 2px solid #e4e4e4; font-size: 19px; }
.foot b { font-weight: 700; }
.status { position: fixed; left: 0; bottom: 0; height: 15px; padding: 5px 6px 0 1px; border-radius: 0 5px 0 0; background: #1e1e1e; color: #c8c8c8; font: 18px/20px Roboto, sans-serif; overflow: hidden; box-shadow: 0 0 16px rgba(0, 0, 0, .2); }
.notes { position: absolute; left: 0; top: 0; width: 100%; height: 100%; stroke: none; pointer-events: none; filter: drop-shadow(0 2px 2px rgba(0, 0, 0, .3)); }
```
FILE: app.js
```js
const C = { blue: '#2086e6', navy: '#0b4a9e', mag: '#ff00ff', pink: '#ff4dff', dark: '#00807a', teal: '#4db6ac', orange: '#ff981f', green: '#66cc0a', lime: '#c3d82e', purple: '#9b27ae', red: '#ff4a4a' };
const use = (id) => `<svg><use href="#${id}"/></svg>`;
const more = `<button class="more" type="button" aria-label="More">${use('i-dots')}</button>`;

/* Calendar rows: name, swatch colour, day border colours, then count|miles|time per weekday */
const techs = [
  ['Adam Waltz (Fort Worth)', C.blue, [C.navy, C.orange, C.green, C.teal, C.lime], ['8|58|3hr 56m', '10|98|4hr 33m', '10|60|4hr 1m', '10|92|4hr 33m', '10|71|4hr 43m']],
  ['Allie Williams', C.mag, [C.blue, C.orange, C.green, C.purple, C.lime], ['10|112|5hr 11m', '10|69|4hr 22m', '10|95|4hr 52m', '10|72|4hr 32m', '10|48|4hr 2m']],
  ['Andy Wilcox', C.dark, [C.blue, C.orange, C.green, C.purple, C.lime], ['10|96|5hr 4m', '10|76|4hr 36m', '10|62|4hr 26m', '10|108|5hr 8m', '10|86|5hr 3m']],
  ['Caleb Van Morrison', C.teal, [C.blue, C.orange, C.green, C.purple, C.lime], ['10|82|4hr 39m', '10|64|4hr 12m', '10|56|4hr 14m', '10|83|4hr 38m', '10|74|4hr 33m']],
  ['', null, [], ['', '', '', '', '']]
];
const off = (t) => `<td class="off"><div class="cell">${more}${t ? '<div class="count">0 pools</div>' : ''}</div></td>`;
document.getElementById('techs').innerHTML = techs.map(([name, fill, edges, days]) =>
  `<tr><th scope="row">${name ? `<a href="#">${name}</a>` : ''}</th>${off(name)}` + days.map((d, i) => {
    const [n, mi, t] = d.split('|');
    return `<td><div class="cell">${more}` + (d ? `<div class="count"><i class="sw" style="background:${fill};border-color:${edges[i]}"></i>0 / ${n}</div><div class="pair"><span>0mi</span><span>-${mi}mi</span></div><div class="track"></div><div class="pair"><span>0</span><span>${t}</span></div>` : '') + '</div></td>';
  }).join('') + off(name) + '</tr>').join('');

/* Unscheduled work orders */
const robert = 'Tech: Robert Manor (Filter Cleans)<br>Service: - -';
const kelly = (d) => `Added By: Kelly Smithfield<br>On: ${d}`;
const orders = [
  ['#2186e6', 'Sand Filter - Backwash', 'Noelle Morgan', '255 E BASSE RD', '78209', robert],
  ['#2186e6', 'Filter Clean - DE', 'Zane Vance', '31 NE 410', '78216', robert],
  ['#9b27ae', 'Service Call', 'Aarya Gonzalez', '154 DAWNVIEW LANE', '78213', kelly('3/5/25')],
  ['#808080', 'Heater / Pump Install', 'Braylen Combs', '8911 EXCELLENCE DR', '78252', kelly('3/6/25')],
  ['#e32c2b', 'Quote Repair', 'Blake Diaz', '12614 Larissa', '78245', kelly('3/6/25')],
  ['#e32c2b', 'Repair', 'Amanda Weber', '9624 Salers Springs', '78254', kelly('3/6/25')],
  ['#a0522d', 'Tune Up Inspection', 'Chana Lopez', '3115 MARIBELLE', '78228', kelly('3/6/25')],
  ['#2186e6', 'Filter Clean 2025 - Cartridge', 'Crew Winters', '9566 Bicknell Sedge', '78254', kelly('3/6/25')]
];
document.getElementById('orders').innerHTML = orders.map(([c, t, n, a, z, m]) =>
  `<li><div class="kind" style="background:${c}">${use('i-grip')}${use('i-wrench-solid')}</div><a class="title" href="#">${t}</a><div><a href="#">${n}</a><br>${a}</div><div class="zip">${z}</div><div class="meta"><div>${m}</div>${more}</div></li>`).join('');

/* Highways as point lists */
const highways = [
  'M359 0L324 28 384 92 M286 2L323 25 300 50 274 95 256 138 229 175 183 282 153 355 150 412 149 618 156 642 156 705 183 755 189 800',
  'M119 337Q140 340 153 350L183 372 213 415 223 435 253 502Q262 522 283 525L330 532 370 565 413 582 453 593Q470 580 493 580L536 585 573 602 613 622Q641 640 641 668V695L656 705',
  'M269 800L323 785 389 755 443 738 526 717 589 705 643 703 693 710 759 717 826 725 866 738 906 757H1013L1059 767 1130 772',
  'M599 362Q560 370 539 405L479 502 436 552 413 582Q399 600 399 612L398 745 416 800',
  'M846 228L899 195 943 182H1033L1106 185 1159 200 1346 204',
  'M1068 0L1059 25 1033 98 1059 128 1076 165 1093 192 1098 222 1083 255 1066 295 1073 348 1083 388 1106 418V435L1079 458 1073 512 1093 525 1091 558 1093 578 1079 602 1081 748',
  'M846 -5L889 2 923 10 953 -2 M1043 15L1059 27 1086 28 1113 52 1139 72 1166 73 1206 58 1246 60 1290 82 1346 118',
  'M1346 255L1313 285 1269 308 1193 345H1170L1151 382 1148 435 1123 478 1103 515 1089 558',
  'M1033 571L1063 552 1089 558 1129 562 1196 560 1239 553 1289 525 1346 487',
  'M846 347L883 352 913 378 933 405 936 465 939 505 946 548 976 555 993 582 996 612 979 665 959 708 954 748 957 800',
  'M1346 607L1313 632 1283 675 1239 722Q1225 733 1216 732L1126 733 1081 758',
  'M853 735L813 795'
];
document.getElementById('highways').innerHTML = ['hw-edge', 'hw-fill'].map((k) => highways.map((d) => `<path class="${k}" d="${d}"/>`).join('')).join('');

/* Place names: text, x, y of middle, anchor (s, m, e), class */
const names = [
  ['Urban Air Trampoline', 123, 34, 's', 'poi'], ['and Adventure Park', 137, 54, 's', 'poi'], ['FARM', 383, 81, 'e'], ['Cedar', 380, 109, 's', 'park'],
  ['BRAUN STATION', 292, 161, 's'], ['NORTHWEST', 278, 234], ['CROSSING', 278, 247], ['GREATER', 345, 307, 's'], ['NORTHWEST', 324, 320, 's'],
  ['IO RANCH', 0, 349, 's'], ['SAN ANTONIO', 295, 360], ['CREEKSIDE', 295, 373], ['PIPERS', 434, 408], ['MEADOW', 434, 421], ['SeaWorld San Antonio', 35, 429, 's', 'poi'],
  ['CROWN', 403, 469, 's'], ['MEADOWS', 393, 482, 's'], ['VILLAGES OF', 101, 541], ['WESTCREEK', 101, 554], ['COOLCREST', 62, 623], ['ADAMS', 305, 691], ['RAINBOW HILLS', 369, 711],
  ['MEADOW', 392, 622, 's'], ['VILLAGE', 393, 635, 's'], ['BIG COUNTRY', 171, 707], ['THUNDERBIRD', 613, 427, 'e'], ['HILLS', 584, 440, 'e'], ['WOODLAWN', 700, 442], ['HILLS', 700, 455],
  ['CULEBRA PARK', 639, 497], ['INNER', 713, 584], ['WEST SIDE', 713, 597], ['LOS JARDINES', 630, 644, 's'], ['EDGEWOOD', 755, 699], ['Lackland Air', 459, 787, 's', 'town'],
  ['LOS ANGELES', 898, 387], ['HEIGHTS -', 895, 399], ['KEYSTONE', 897, 412], ['DELLVIEW', 864, 298, 's'], ['GREATER', 976, 90], ['HARMONY HILLS', 976, 103],
  ['Castle Hills', 862, 125, 's', 'town'], ['Alamo Heights', 1074, 357, 's', 'town'], ['Terrell Hills', 1150, 394, 's', 'town'], ['Phil', 883, 20, 'm', 'park'], ['Hardberger', 930, 40, 'e', 'park'], ['Park', 901, 59, 'e', 'park'], ['Park', 1188, 0, 'm', 'park'],
  ['SAN ANTONIO', 1208, 90], ['INTERNATIONAL', 1208, 103], ['AIRPORT VICINITY', 1208, 116], ['SHEARER HILLS', 1036, 216], ['/ RIDGEVIEW', 1036, 229], ['OAK PARK -', 1213, 240], ['NORTHWOOD', 1213, 252],
  ['NORTH CENTRAL', 1093, 313, 'e'], ['EAST', 1328, 322, 's'], ['Northern', 1279, 45, 's', 'poi'], ['San Antonio Zoo', 953, 429, 's', 'park'], ['Brooke Army', 1322, 434, 'e', 'med'], ['Medical Ctr (BAMC)', 1322, 453, 'e', 'med'],
  ['FORT SAM', 1235, 479], ['HOUSTON', 1235, 492], ['WOODLAWN', 929, 503, 'e'], ['LAKE', 889, 516], ['TOBIN HILL', 1096, 534, 'e'], ['San Antonio', 926, 624, 's', 'city'], ['ARENA DISTRICT', 1174, 625, 's'],
  ['AVENIDA', 943, 665], ['GUADALUPE', 943, 677], ['SOUTHTOWN', 1047, 672], ['DENVER', 1143, 703], ['HEIGHTS', 1143, 716], ['EAST SIDE', 1223, 750, 's']
];
const anchors = { s: 'start', m: 'middle', e: 'end' };
const rise = { poi: 7, park: 7, med: 7, town: 7, city: 12 };
let out = names.map(([t, x, y, a = 'm', k = '']) => `<text class="${k}" x="${x}" y="${y + (rise[k] || 5)}" text-anchor="${anchors[a]}">${t}</text>`).join('');
out += '<path id="wz" fill="none" d="M1236 64Q1290 66 1330 102"/><text class="road"><textPath href="#wz">Wurzbach Pkwy</textPath></text><text class="road" x="945" y="8">Wurzbach</text>';
[['1604', 183, 291], ['1604', 179, 748], ['151', 209, 404], ['151', 381, 570], ['90', 309, 793], ['90', 678, 709], ['281', 1079, 174], ['281', 1078, 465], ['368', 1130, 467]].forEach(([t, x, y]) => {
  const w = t.length * 6 + 12;
  out += `<rect x="${x - w / 2}" y="${y - 9}" width="${w}" height="18" rx="8" fill="#fff" stroke="#555"/><text class="sh" x="${x}" y="${y + 5}" text-anchor="middle">${t}</text>`;
});
[['410', 430, 563], ['410', 958, 182], ['10', 938, 460], ['10', 954, 551], ['35', 1033, 571], ['35', 1277, 531], ['10', 1310, 640], ['37', 1104, 755]].forEach(([t, x, y]) => {
  const w = t.length * 4 + 2;
  out += `<path fill="#3b6fc0" d="M${x - w} ${y - 8}h${2 * w}q2 14-${w} 20q-${w + 2}-6-${w}-20z"/><path fill="#d0514a" d="M${x - w} ${y - 11}h${2 * w}v4h-${2 * w}z"/><text class="shi" x="${x}" y="${y + 5}" text-anchor="middle">${t}</text>`;
});
document.getElementById('labels').innerHTML = out;

/* Pins: number, x, y of the head, fill, outline */
const pins = `- 50 26 purple lime,- 326 -25 mag green,- 865 -14 mag blue,- 1097 -32 red blue,9 470 15 pink orange,3 1017 37 teal orange,1 305 42 purple orange,8 863 50 pink lime,4 755 55 dark orange,4 665 63 dark lime,5 1203 104 orange lime,1 1306 123 purple lime,- 841 143 mag lime,6 305 168 dark green,8 252 171 teal blue,4 1071 196 pink orange,5 1142 215 pink purple,5 1121 183 mag lime,7 878 201 teal blue,2 360 204 orange lime,- 409 212 orange lime,6 1300 212 orange lime,- 1356 212 purple orange,6 1226 220 green orange,5 268 244 dark lime,7 873 254 dark lime,3 343 258 purple orange,8 283 269 teal green,8 982 291 mag orange,3 1229 297 dark lime,10 89 302 green blue,9 935 313 purple blue,6 943 352 dark lime,- 725 348 red green,- 783 351 pink green,- 414 357 green lime,2 819 368 dark purple,5 1016 382 purple orange,2 184 389 pink lime,5 235 389 green teal,5 309 409 red blue,4 1023 426 pink blue,10 1079 429 green orange,6 370 434 green teal,10 636 436 teal green,3 963 449 mag teal,7 258 457 purple lime,6 209 488 green lime,4 780 489 orange green,8 859 499 red teal,4 1308 509 teal blue,2 945 522 teal blue,1 995 531 dark green,8 1014 507 mag green,9 306 529 green blue,8 349 529 teal purple,4 770 535 green teal,4 165 536 dark blue,3 1215 549 pink orange,10 672 556 pink purple,6 1006 579 pink lime,4 588 614 dark purple,4 1063 622 dark green,4 1014 622 mag teal,10 1245 626 teal orange,6 430 628 mag orange,5 891 678 teal orange,3 876 633 mag blue,7 984 648 dark orange,3 1182 657 mag orange,10 752 678 teal blue,5 730 657 mag teal,8 773 653 green orange,1 352 680 orange lime,4 360 637 dark purple,7 407 690 mag green,9 1193 730 mag green,8 1027 734 dark blue,2 398 771 purple blue,6 424 736 purple lime,3 1283 736 red blue,6 881 754 dark orange,7 1081 758 dark orange,3 765 795 orange green,6 769 759 mag green,10 1100 778 dark orange,6 896 779 dark green,10 1219 783 orange green,- 1003 804 purple orange,- 540 810 pink purple`.split(',');
const clusters = `2 396 7,2 504 38,2 835 34,2 299 155,2 393 300,2 -5 370,2 251 540,2 380 595,2 313 639,2 24 795,2 665 476,2 707 487,3 788 425,2 773 459,3 805 473,6 840 473,2 825 512,2 874 486,2 787 585,2 858 582,2 769 623,2 458 605,2 948 432,2 1156 412,2 1129 455,3 1044 473,3 1054 502,2 906 469,2 1175 515,2 910 556,3 1065 605,8 1108 620,2 1127 641,2 1190 603,2 1168 619,2 961 637,2 922 688,2 983 688,3 1045 678,4 1106 699,3 1065 716,4 1176 719,3 1278 703,5 1135 746,5 912 758,3 940 787,2 1346 615,2 946 59,3 979 103,2 1228 84,2 1252 91,2 1350 120,3 1050 179,2 1258 191,2 1194 224,2 949 268,2 921 282,4 1027 240,3 1174 270,4 1268 275,4 1014 322,2 886 335,2 988 353,3 959 404`.split(',');
const drop = 'M0 37C-5 24-19 14-19 0A19 19 0 0 1 19 0C19 14 5 24 0 37Z';
let art = '';
[[326, 33, '#17a2b8', '★'], [195, 455, '#17a2b8', '✿'], [1112, 422, '#129456', '❀'], [1339, 438, '#e5534b', 'H']].forEach(([x, y, c, g]) => {
  art += `<g transform="translate(${x} ${y})"><path d="M0 27C-4 17-14 10-14 0A14 14 0 0 1 14 0C14 10 4 17 0 27Z" fill="${c}"/><text y="6">${g}</text></g>`;
});
art += pins.map((p) => {
  const [n, x, y, f, s] = p.split(' ');
  return `<g transform="translate(${x} ${y})"><path d="${drop}" fill="${C[f]}" stroke="${C[s]}" stroke-width="3"/>${n === '-' ? '' : `<text y="6">${n}</text>`}</g>`;
}).join('');
const cluster = (n, x, y, c) => `<g class="cl" transform="translate(${x} ${y})"><g fill="${c}"><circle r="29" opacity=".25"/><circle r="26" opacity=".3"/><circle r="23" opacity=".65"/></g><text y="6">${n}</text></g>`;
art += clusters.map((p) => cluster(...p.split(' '), '#2f8bff')).join('') + cluster(10, 1156, 574, '#fdbb22');
[[622, 398, '#a0522d'], [1021, 8, '#2086e6'], [1074, 275, '#2086e6']].forEach(([x, y, c]) => {
  art += `<g transform="translate(${x} ${y})" color="#fff"><path d="M-25 0L0-25 25 0 0 25z" fill="${c}"/><use href="#i-wrench-solid" x="-8" y="-8" width="16" height="16"/></g>`;
});
document.getElementById('markers').innerHTML = art;
```
